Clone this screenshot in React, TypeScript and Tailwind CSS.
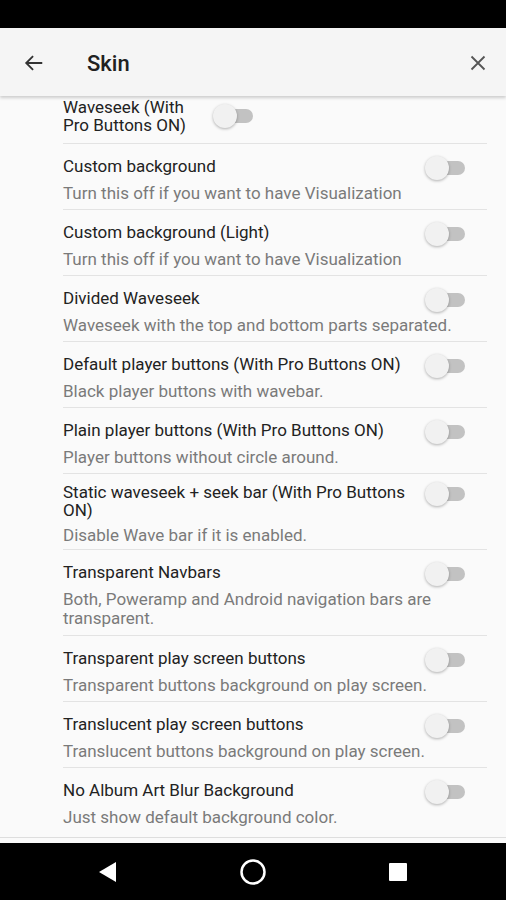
import React from "react";

type Row = {
  title: React.ReactNode;
  sub: React.ReactNode;
  pt: string;
  gap?: string;
  pb?: string;
};

const rows: Row[] = [
  { title: "Custom background", sub: "Turn this off if you want to have Visualization", pt: "pt-[12px]" },
  { title: "Custom background (Light)", sub: "Turn this off if you want to have Visualization", pt: "pt-[12px]" },
  { title: "Divided Waveseek", sub: "Waveseek with the top and bottom parts separated.", pt: "pt-[12px]" },
  { title: "Default player buttons (With Pro Buttons ON)", sub: "Black player buttons with wavebar.", pt: "pt-[12px]" },
  { title: "Plain player buttons (With Pro Buttons ON)", sub: "Player buttons without circle around.", pt: "pt-[12px]" },
  {
    title: (
      <>
        Static waveseek + seek bar (With Pro Buttons
        <br />
        ON)
      </>
    ),
    sub: "Disable Wave bar if it is enabled.",
    pt: "pt-[8px]",
    gap: "mt-[7px]",
    pb: "pb-[4px]",
  },
  {
    title: "Transparent Navbars",
    sub: (
      <>
        Both, Poweramp and Android navigation bars are
        <br />
        transparent.
      </>
    ),
    pt: "pt-[12px]",
    pb: "pb-[7px]",
  },
  { title: "Transparent play screen buttons", sub: "Transparent buttons background on play screen.", pt: "pt-[12px]" },
  { title: "Translucent play screen buttons", sub: "Translucent buttons background on play screen.", pt: "pt-[12px]" },
];

const Toggle: React.FC = () => (
  <div className="relative w-[40px] h-[24px] shrink-0">
    <div className="absolute left-[6px] right-0 top-[5px] h-[14px] rounded-full bg-[#c2c2c2]" />
    <div className="absolute left-0 top-0 w-[24px] h-[24px] rounded-full bg-[#f1f1f1] shadow-[0_1px_3px_rgba(0,0,0,0.3)]" />
  </div>
);

const Pref: React.FC<Row & { last?: boolean }> = ({ title, sub, pt, gap, pb, last }) => (
  <div className={`${pt} ${pb ?? "pb-[6px]"} ${last ? "" : "border-b border-[#e3e3e3]"}`}>
    <div className="flex items-start justify-between">
      <div className="text-[17px] leading-[18px] text-[#222] pt-[1px]">{title}</div>
      <div className="mr-[22px]">
        <Toggle />
      </div>
    </div>
    <div className={`text-[17px] leading-[19px] text-[#7a7a7a] ${gap ?? "mt-[4px]"}`}>{sub}</div>
  </div>
);

export default function App() {
  return (
    <div
      className="w-[506px] h-[900px] flex flex-col bg-[#fafafa] overflow-hidden"
      style={{ fontFamily: "Roboto, 'Noto Sans', sans-serif" }}
    >
      {/* status bar */}
      <div className="h-[28px] bg-black shrink-0" />

      {/* app bar */}
      <div className="relative z-10 h-[68px] shrink-0 bg-[#f5f5f5] flex items-center shadow-[0_2px_3px_rgba(0,0,0,0.18)]">
        <div className="w-[87px] pl-[23px] pt-[2px]">
          <svg width="22" height="22" viewBox="0 0 24 24" fill="none" stroke="#333" strokeWidth="2">
            <path d="M21 12H3.5M11 4.5 3.5 12l7.5 7.5" />
          </svg>
        </div>
        <div className="flex-1 text-[22px] font-medium text-[#212121] pt-[3px]">Skin</div>
        <div className="pr-[20px] pt-[2px]">
          <svg width="16" height="16" viewBox="0 0 16 16" stroke="#555" strokeWidth="1.8">
            <path d="M1.5 1.5l13 13M14.5 1.5l-13 13" />
          </svg>
        </div>
      </div>

      {/* list */}
      <div className="flex-1">
        <div className="border-b border-[#dedede]">
          <div className="pl-[63px] pr-[19px]">
            <div className="flex items-center gap-[22px] pt-[2px] pb-[9px] border-b border-[#e3e3e3]">
              <div className="text-[17px] leading-[18px] text-[#222] w-[128px]">
                <div>Waveseek (With</div>
                <div>Pro Buttons ON)</div>
              </div>
              <Toggle />
            </div>
            {rows.map((r, i) => (
              <Pref key={i} {...r} />
            ))}
            <Pref
              title="No Album Art Blur Background"
              sub="Just show default background color."
              pt="pt-[12px]"
              pb="pb-[10px]"
              last
            />
          </div>
        </div>
      </div>

      {/* nav bar */}
      <div className="h-[57px] shrink-0 bg-black flex items-center justify-between px-[98px]">
        <svg width="20" height="22" viewBox="0 0 20 22">
          <path d="M18 1v20L1 11z" fill="#fff" />
        </svg>
        <svg width="28" height="28" viewBox="0 0 28 28">
          <circle cx="14" cy="14" r="11.5" fill="none" stroke="#fff" strokeWidth="2.5" />
        </svg>
        <svg width="20" height="20" viewBox="0 0 20 20">
          <rect x="1" y="1" width="18" height="18" rx="1" fill="#fff" />
        </svg>
      </div>
    </div>
  );
}
